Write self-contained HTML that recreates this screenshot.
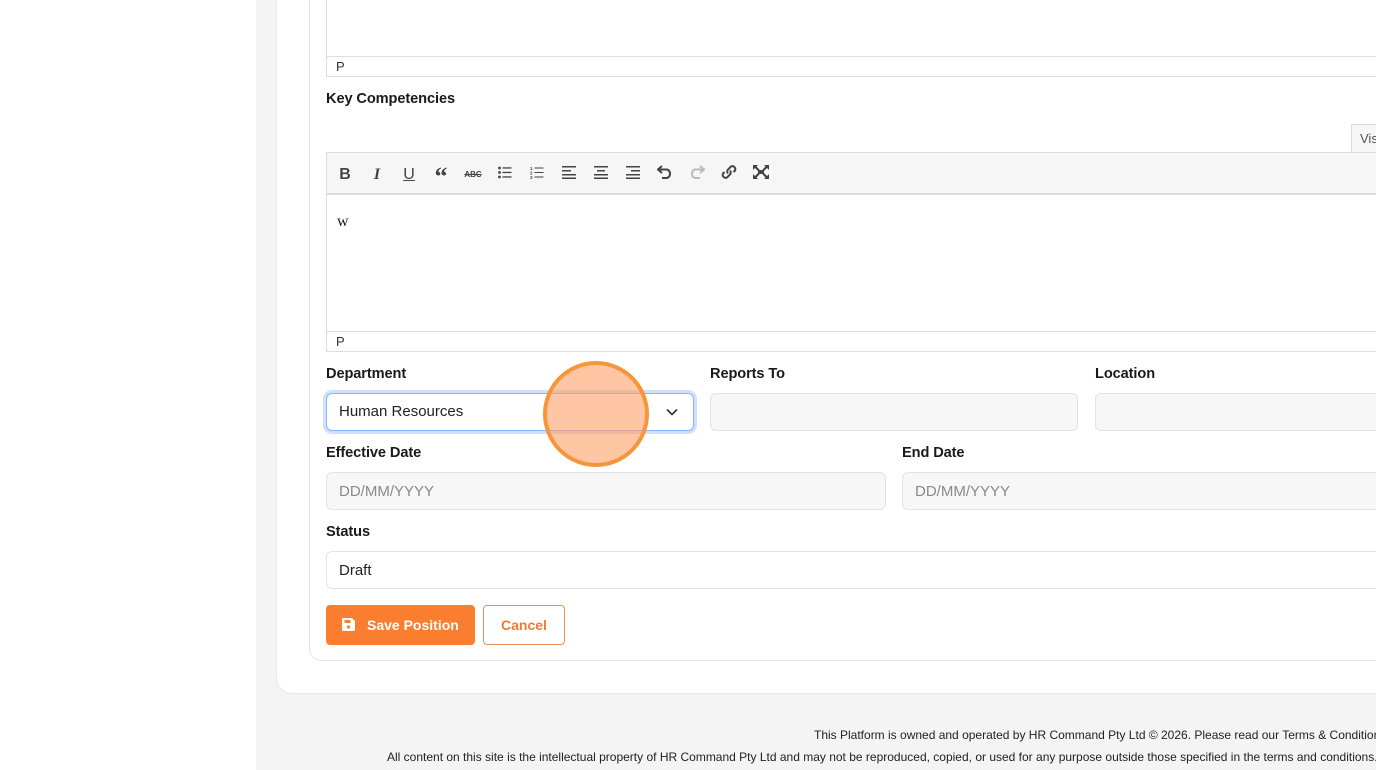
<!DOCTYPE html>
<html><head><meta charset="utf-8"><style>
*{box-sizing:border-box;margin:0;padding:0}
body{width:1376px;height:770px;overflow:hidden;background:#f4f4f4;font-family:"Liberation Sans",sans-serif;color:#1a1a1a;position:relative}
.side{position:absolute;left:0;top:0;width:256px;height:770px;background:#fff}
.outer{position:absolute;left:276px;top:-20px;width:1200px;height:714px;background:#fff;border:1px solid #e8e8e8;border-radius:16px}
.inner{position:absolute;left:309px;top:-20px;width:1200px;height:681px;background:#fff;border:1px solid #e6e6e6;border-radius:12px}
.a{position:absolute}
.lbl{font-size:14.6px;font-weight:bold;color:#1a1a1a;letter-spacing:-0.1px}
.inp{background:#f7f7f7;border:1px solid #e3e3e3;border-radius:6px;font-size:15px;color:#222;padding-left:12px;line-height:38px}
.ph{color:#8a8a8a}
.ed{border:1px solid #dcdcdc;background:#fff}
.sb{font-size:13px;color:#333;padding-left:9px;line-height:19px;border-top:1px solid #dcdcdc}
.tb{background:#f5f6f5;border-bottom:2px solid #dcdcdc;height:42px;display:flex;align-items:center;padding:3px 0 0 2px}
.tb span{width:32px;text-align:center;font-size:16px;color:#444;font-weight:bold}
.foot{font-size:12px;color:#222;white-space:nowrap}
</style></head><body>
<div class="side"></div>
<div class="outer"></div>
<div class="inner"></div>

<div class="a ed" style="left:326px;top:-10px;width:1100px;height:87px"></div>
<div class="a sb" style="left:327px;top:56px;width:1100px">P</div>

<div class="a lbl" style="left:326px;top:91px">Key Competencies</div>
<div class="a" style="left:1351px;top:124px;width:60px;height:29px;border:1px solid #dcdcdc;border-bottom:none;background:#f5f6f5;font-size:13px;color:#555;padding:6px 0 0 8px">Visual</div>
<div class="a ed" style="left:326px;top:152px;width:1100px;height:200px"></div>
<div class="a tb" style="left:327px;top:153px;width:1100px">
<span style="font-family:'Liberation Sans'">B</span><span style="font-style:italic;font-family:'Liberation Serif'">I</span><span style="text-decoration:underline;font-weight:normal">U</span><span style="font-family:'Liberation Serif';font-size:26px;line-height:20px;height:16px">&#8220;</span><span style="font-size:8px;text-decoration:line-through">ABC</span>
<span><svg width="14" height="13" viewBox="0 0 14 13"><g fill="#444"><circle cx="1.5" cy="2" r="1.4"/><circle cx="1.5" cy="6.5" r="1.4"/><circle cx="1.5" cy="11" r="1.4"/><rect x="4.5" y="1.3" width="9" height="1.3"/><rect x="4.5" y="5.8" width="9" height="1.3"/><rect x="4.5" y="10.3" width="9" height="1.3"/></g></svg></span>
<span><svg width="14" height="13" viewBox="0 0 14 13"><g fill="#444" font-size="4.5" font-family="Liberation Sans"><text x="0" y="4">1</text><text x="0" y="8.5">2</text><text x="0" y="13">3</text><rect x="4.5" y="1.5" width="9" height="1"/><rect x="4.5" y="6" width="9" height="1"/><rect x="4.5" y="10.5" width="9" height="1"/></g></svg></span>
<span><svg width="14" height="13" viewBox="0 0 14 13"><g fill="#444"><rect y="0" width="14" height="1.5"/><rect y="4" width="9" height="1.5"/><rect y="8" width="14" height="1.5"/><rect y="11.5" width="14" height="1.5"/></g></svg></span>
<span><svg width="14" height="13" viewBox="0 0 14 13"><g fill="#444"><rect y="0" width="14" height="1.5"/><rect x="3" y="4" width="8" height="1.5"/><rect y="8" width="14" height="1.5"/><rect y="11.5" width="14" height="1.5"/></g></svg></span>
<span><svg width="14" height="13" viewBox="0 0 14 13"><g fill="#444"><rect y="0" width="14" height="1.5"/><rect x="5" y="4" width="9" height="1.5"/><rect y="8" width="14" height="1.5"/><rect y="11.5" width="14" height="1.5"/></g></svg></span>
<span><svg width="16" height="14" viewBox="0 0 16 14"><path d="M5 1 L1 4.5 L5 8 M1.5 4.5 H10 A4.5 4.5 0 0 1 10 13 H5" fill="none" stroke="#444" stroke-width="2"/></svg></span>
<span><svg width="16" height="14" viewBox="0 0 16 14"><path d="M11 1 L15 4.5 L11 8 M14.5 4.5 H6 A4.5 4.5 0 0 0 6 13 H11" fill="none" stroke="#bbb" stroke-width="2"/></svg></span>
<span><svg width="16" height="16" viewBox="0 0 16 16"><g fill="none" stroke="#444" stroke-width="2"><path d="M7 9.5 a3 3 0 0 1 0-4 l3-3 a3 3 0 0 1 4 4 l-1.5 1.5"/><path d="M9 6.5 a3 3 0 0 1 0 4 l-3 3 a3 3 0 0 1-4-4 l1.5-1.5"/></g></svg></span>
<span><svg width="16" height="14" viewBox="0 0 16 14"><g fill="#444"><path d="M0 0h5l-1.5 1.5 3 3-1.5 1.5-3-3L0 5z M16 0h-5l1.5 1.5-3 3 1.5 1.5 3-3L16 5z M0 14h5l-1.5-1.5 3-3-1.5-1.5-3 3L0 9z M16 14h-5l1.5-1.5-3-3 1.5-1.5 3 3L16 9z"/><rect x="5" y="5" width="6" height="4"/></g></svg></span>
</div>
<div class="a" style="left:337px;top:213px;font-family:'Liberation Serif',serif;font-size:16px">w</div>
<div class="a sb" style="left:327px;top:331px;width:1100px">P</div>

<div class="a lbl" style="left:326px;top:366px">Department</div>
<div class="a lbl" style="left:710px;top:366px">Reports To</div>
<div class="a lbl" style="left:1095px;top:366px">Location</div>
<div class="a inp" style="left:326px;top:393px;width:368px;height:38px;background:#fff;border:1px solid #86b7fe;box-shadow:0 0 0 3px #cfe0fc;line-height:36px">Human Resources
<svg style="position:absolute;right:15px;top:14px" width="12" height="8" viewBox="0 0 12 8"><path d="M1 1.5 L6 6.5 L11 1.5" fill="none" stroke="#333" stroke-width="1.6"/></svg></div>
<div class="a inp" style="left:710px;top:393px;width:368px;height:38px"></div>
<div class="a inp" style="left:1095px;top:393px;width:368px;height:38px"></div>

<div class="a" style="left:543px;top:361px;width:106px;height:106px;border-radius:50%;background:rgba(253,160,100,0.6);border:4px solid #f7953a"></div>

<div class="a lbl" style="left:326px;top:445px">Effective Date</div>
<div class="a lbl" style="left:902px;top:445px">End Date</div>
<div class="a inp ph" style="left:326px;top:472px;width:560px;height:38px">DD/MM/YYYY</div>
<div class="a inp ph" style="left:902px;top:472px;width:560px;height:38px">DD/MM/YYYY</div>

<div class="a lbl" style="left:326px;top:524px">Status</div>
<div class="a inp" style="left:326px;top:551px;width:1140px;height:38px;background:#fff">Draft</div>

<div class="a" style="left:326px;top:605px;width:149px;height:40px;background:#fb7e30;border-radius:4px;color:#fff;font-size:14px;font-weight:bold;line-height:40px;padding-left:41px">Save Position
<svg style="position:absolute;left:16px;top:13px" width="13" height="13" viewBox="0 0 13 13"><path d="M1.5 0h8.5l3 3v8.5a1.5 1.5 0 0 1-1.5 1.5h-10A1.5 1.5 0 0 1 0 11.5v-10A1.5 1.5 0 0 1 1.5 0z" fill="#fff"/><rect x="2.5" y="2" width="6" height="3" fill="#fb7e30"/><circle cx="6.5" cy="9" r="1.6" fill="#fb7e30"/></svg></div>
<div class="a" style="left:483px;top:605px;width:82px;height:40px;border:1px solid #e8925c;border-radius:4px;color:#f07a30;font-size:14px;font-weight:bold;line-height:38px;text-align:center;background:#fff">Cancel</div>

<div class="a foot" style="left:814px;top:728px">This Platform is owned and operated by HR Command Pty Ltd © 2026. Please read our Terms &amp; Conditions</div>
<div class="a foot" style="left:387px;top:750px">All content on this site is the intellectual property of HR Command Pty Ltd and may not be reproduced, copied, or used for any purpose outside those specified in the terms and conditions.</div>
</body></html>
